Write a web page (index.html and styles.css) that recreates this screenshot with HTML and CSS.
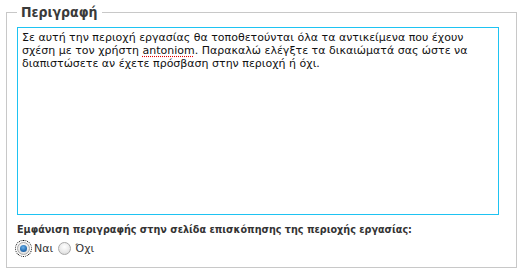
FILE: index.html
```html
<!DOCTYPE html>
<html lang="el">
<head>
<meta charset="utf-8">
<title>Περιγραφή</title>
<link rel="stylesheet" href="styles.css">
</head>
<body>
<fieldset class="panel">
  <legend class="panel-title">Περιγραφή</legend>
  <div class="editor" role="textbox" aria-multiline="true">Σε αυτή την περιοχή εργασίας θα τοποθετούνται όλα τα αντικείμενα που έχουν σχέση με τον χρήστη <span class="misspelled">antoniom</span>. Παρακαλώ ελέγξτε τα δικαιώματά σας ώστε να διαπιστώσετε αν έχετε πρόσβαση στην περιοχή ή όχι.</div>
  <p class="question">Εμφάνιση περιγραφής στην σελίδα επισκόπησης της περιοχής εργασίας:</p>
  <div class="choices">
    <label class="choice"><span class="radio is-checked is-focused"></span>Ναι</label>
    <label class="choice"><span class="radio"></span>Όχι</label>
  </div>
</fieldset>
</body>
</html>
```

FILE: styles.css
```css
html, body {
  margin: 0;
  background: #ffffff;
}

body {
  font-family: "DejaVu Sans", sans-serif;
  color: #333333;
}

.panel {
  margin: 3px 0 0 6px;
  width: 511px;
  box-sizing: border-box;
  border: 1px solid #c8c8c8;
  padding: 6px 17px 11px 10px;
}

.panel-title {
  padding: 0 4px;
  font-family: "DejaVu Sans Condensed", "DejaVu Sans", sans-serif;
  font-size: 14px;
  line-height: 18px;
  font-weight: bold;
  color: #3a3a3a;
}

.editor {
  box-sizing: border-box;
  height: 188px;
  border: 1px solid #1ec3f2;
  padding: 3px 4px;
  font-size: 11px;
  line-height: 13px;
  color: #111111;
}

.misspelled {
  text-decoration: underline dotted #e00000;
  text-underline-offset: 2px;
}

.question {
  margin: 8px 0 5px;
  font-family: "DejaVu Sans Condensed", "DejaVu Sans", sans-serif;
  font-size: 10.7px;
  line-height: 13px;
  font-weight: bold;
  color: #333333;
}

.choices {
  display: flex;
  align-items: center;
  gap: 5px;
  font-size: 11px;
  line-height: 15px;
  color: #333333;
}

.choice {
  display: flex;
  align-items: center;
  gap: 4px;
}

.radio {
  position: relative;
  box-sizing: border-box;
  width: 13px;
  height: 13px;
  border-radius: 50%;
  border: 1px solid #a9a9a9;
  background: radial-gradient(circle at 50% 35%, #ffffff 0%, #e8e8e8 60%, #cfcfcf 100%);
}

.radio.is-checked::after {
  content: "";
  position: absolute;
  left: 2px;
  top: 2px;
  width: 7px;
  height: 7px;
  border-radius: 50%;
  background: radial-gradient(circle at 45% 35%, #6fb2e8 0%, #2a73b8 55%, #124a85 100%);
}

.radio.is-focused {
  outline: 1px dotted #000000;
  outline-offset: 1px;
}
```
